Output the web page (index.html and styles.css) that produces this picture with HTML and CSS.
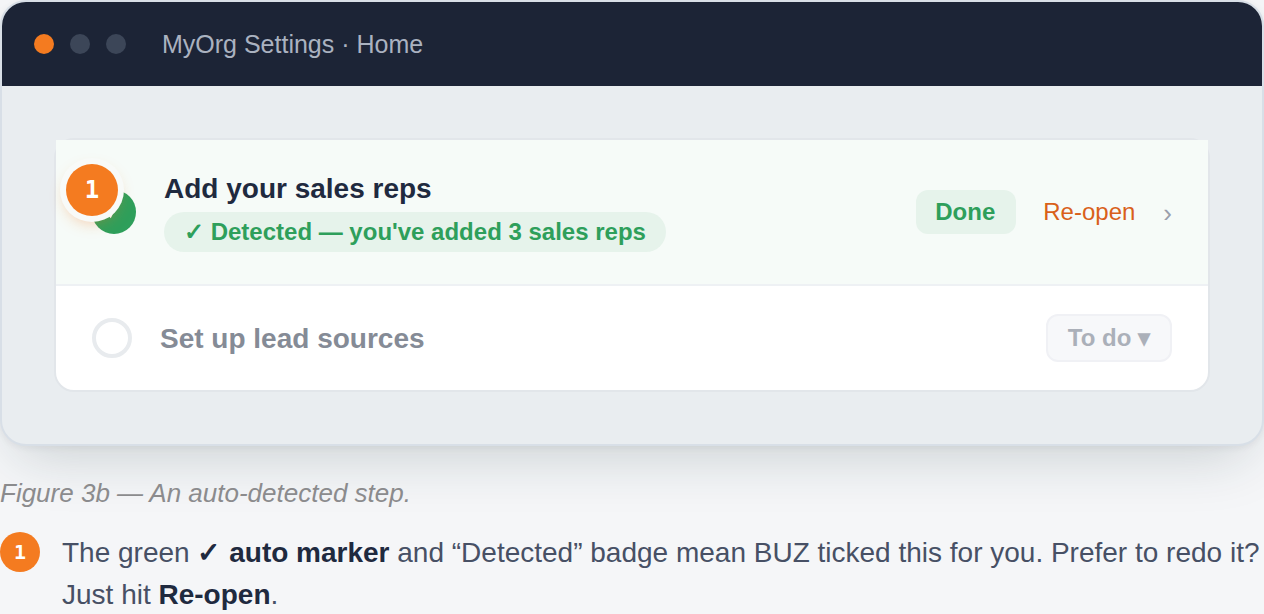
FILE: index.html
```
<!DOCTYPE html>
<html lang="en">
<head>
  <meta charset="UTF-8">
  <title>MyOrg Settings</title>
  <link rel="stylesheet" href="styles.css">
</head>
<body>
  <figure class="figure">
    <div class="window">
      <div class="window-bar">
        <span class="dot dot-active"></span>
        <span class="dot"></span>
        <span class="dot"></span>
        <span class="window-title">MyOrg Settings · Home</span>
      </div>
      <div class="window-body">
        <div class="steps">
          <div class="step step-done">
            <span class="marker">1</span>
            <span class="check">
              <svg width="20" height="20" viewBox="0 0 20 20" fill="none" stroke="#fff" stroke-width="2.5"><path d="M3 10l3.5 4L11.5 4"/></svg>
            </span>
            <div class="step-text">
              <div class="step-title">Add your sales reps</div>
              <span class="detected">✓ Detected — you've added 3 sales reps</span>
            </div>
            <span class="status">Done</span>
            <a class="reopen">Re-open</a>
            <span class="chevron">›</span>
          </div>
          <div class="step">
            <span class="ring"></span>
            <div class="step-title step-text muted">Set up lead sources</div>
            <span class="todo">To do ▾</span>
          </div>
        </div>
      </div>
    </div>
    <figcaption>Figure 3b — An auto-detected step.</figcaption>
  </figure>

  <div class="note">
    <span class="note-num">1</span>
    <p>The green <b><span class="tick">✓</span> auto marker</b> and “Detected” badge mean BUZ ticked this for you. Prefer to redo it? Just hit <b>Re-open</b>.</p>
  </div>
</body>
</html>
```
FILE: styles.css
```
* {
  box-sizing: border-box;
}

body {
  margin: 0;
  height: 614px;
  overflow: hidden;
  font-family: "Liberation Sans", Arial, sans-serif;
  background: #f5f6f8;
  color: #1f2a3f;
}

.figure {
  margin: 0;
}

.window {
  height: 446px;
  border: 2px solid #d8dfe7;
  border-radius: 26px;
  overflow: hidden;
  background: #e9edf0;
  box-shadow: 0 2px 6px rgba(28, 36, 54, 0.06), 0 24px 60px -16px rgba(20, 48, 54, 0.2);
}

.window-bar {
  display: flex;
  align-items: center;
  gap: 16px;
  height: 84px;
  padding: 0 32px;
  background: #1c2436;
}

.dot {
  width: 20px;
  height: 20px;
  border-radius: 50%;
  background: #3c4658;
}

.dot-active {
  background: #f47b20;
}

.window-title {
  margin-left: 20px;
  font-size: 25px;
  color: #aab2c0;
}

.window-body {
  padding: 52px;
}

.steps {
  border: 2px solid #e2e6ea;
  border-radius: 20px;
  background: #fff;
}

.step {
  position: relative;
  display: flex;
  align-items: center;
  gap: 28px;
  height: 104px;
  padding: 0 36px;
}

.step-done {
  height: 146px;
  border-bottom: 2px solid #eef1f4;
  background: #f6fbf8;
}

.marker {
  position: absolute;
  left: 10px;
  top: 24px;
  width: 52px;
  height: 52px;
  border-radius: 50%;
  background: #f47b20;
  box-shadow: 0 0 0 6px #f8faf8, 0 6px 16px rgba(244, 123, 32, 0.4);
  color: #fff;
  font: bold 24px/52px "DejaVu Sans Mono", monospace;
  text-align: center;
}

.check {
  display: flex;
  align-items: center;
  justify-content: center;
  width: 44px;
  height: 44px;
  border-radius: 50%;
  background: #2e9f5b;
}

.step-text {
  flex: 1;
}

.step-title {
  font-size: 28px;
  line-height: 44px;
  font-weight: bold;
}

.step-done .step-title {
  line-height: 38px;
  padding-bottom: 4px;
}

.muted {
  padding-top: 2px;
  color: #858b96;
}

.detected {
  display: block;
  width: fit-content;
  height: 40px;
  margin-bottom: 2px;
  padding: 0 20px;
  border-radius: 20px;
  background: #e6f3eb;
  color: #2e9f5b;
  font-size: 24px;
  line-height: 40px;
  font-weight: bold;
}

.status {
  height: 44px;
  margin-right: -1px;
  padding: 0 21px 0 19px;
  border-radius: 12px;
  background: #e6f3eb;
  color: #2e9f5b;
  font-size: 24px;
  line-height: 44px;
  font-weight: bold;
}

.reopen {
  color: #d9601a;
  font-size: 24px;
}

.chevron {
  padding-top: 3px;
  color: #9a9fac;
  font-size: 26px;
}

.ring {
  width: 40px;
  height: 40px;
  border: 4px solid #e8ebee;
  border-radius: 50%;
}

.todo {
  height: 48px;
  padding: 0 20px;
  border: 2px solid #f0f1f5;
  border-radius: 12px;
  background: #f7f8fa;
  color: #abb0b9;
  font-size: 24px;
  line-height: 44px;
  font-weight: bold;
}

figcaption {
  margin-top: 32px;
  color: #8b8b8d;
  font-size: 26px;
  line-height: 30px;
  font-style: italic;
}

.note {
  display: flex;
  gap: 22px;
  margin-top: 24px;
}

.note-num {
  flex: none;
  width: 40px;
  height: 40px;
  border-radius: 50%;
  background: #f47b20;
  color: #fff;
  font: bold 20px/40px "DejaVu Sans Mono", monospace;
  text-align: center;
}

.note p {
  margin: 0;
  color: #475065;
  font-size: 28px;
  line-height: 42px;
}

.note b {
  color: #1f2a3f;
}

.tick {
  margin-right: 1px;
}
```
